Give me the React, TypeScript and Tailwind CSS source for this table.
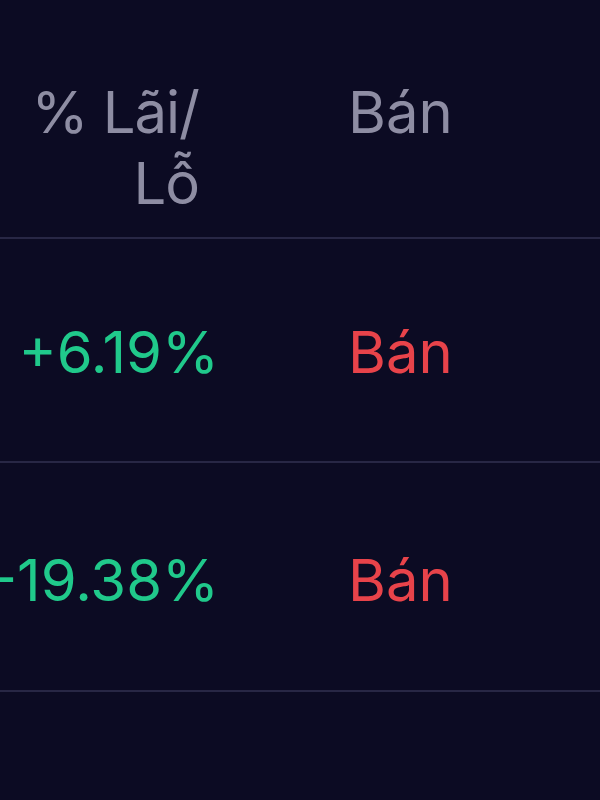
const rows = [
  { pct: "+6.19%", pt: "pt-[78px] pb-[73px]" },
  { pct: "-19.38%", pt: "pt-[82px] pb-[74px]" },
];

export default function App() {
  return (
    <div
      className="min-h-[800px] w-[600px] overflow-hidden bg-[#0c0b23] text-[58px] leading-[71px]"
      style={{ fontFamily: "Inter, 'Noto Sans', sans-serif" }}
    >
      {/* Header */}
      <div className="grid grid-cols-[219px_1fr] gap-x-[129px] border-b-2 border-[#282745] pt-[77px] pb-[18px] text-[#8e8da3]">
        <div className="pr-5 text-right tracking-[-1px]">
          % Lãi/
          <br />
          Lỗ
        </div>
        <div>Bán</div>
      </div>

      {rows.map((r) => (
        <div
          key={r.pct}
          className={`grid grid-cols-[219px_1fr] gap-x-[129px] border-b-2 border-[#282745] ${r.pt}`}
        >
          <div className="flex justify-end whitespace-nowrap text-[#20c98b]">{r.pct}</div>
          <div className="text-[#e8434a]">Bán</div>
        </div>
      ))}
    </div>
  );
}
